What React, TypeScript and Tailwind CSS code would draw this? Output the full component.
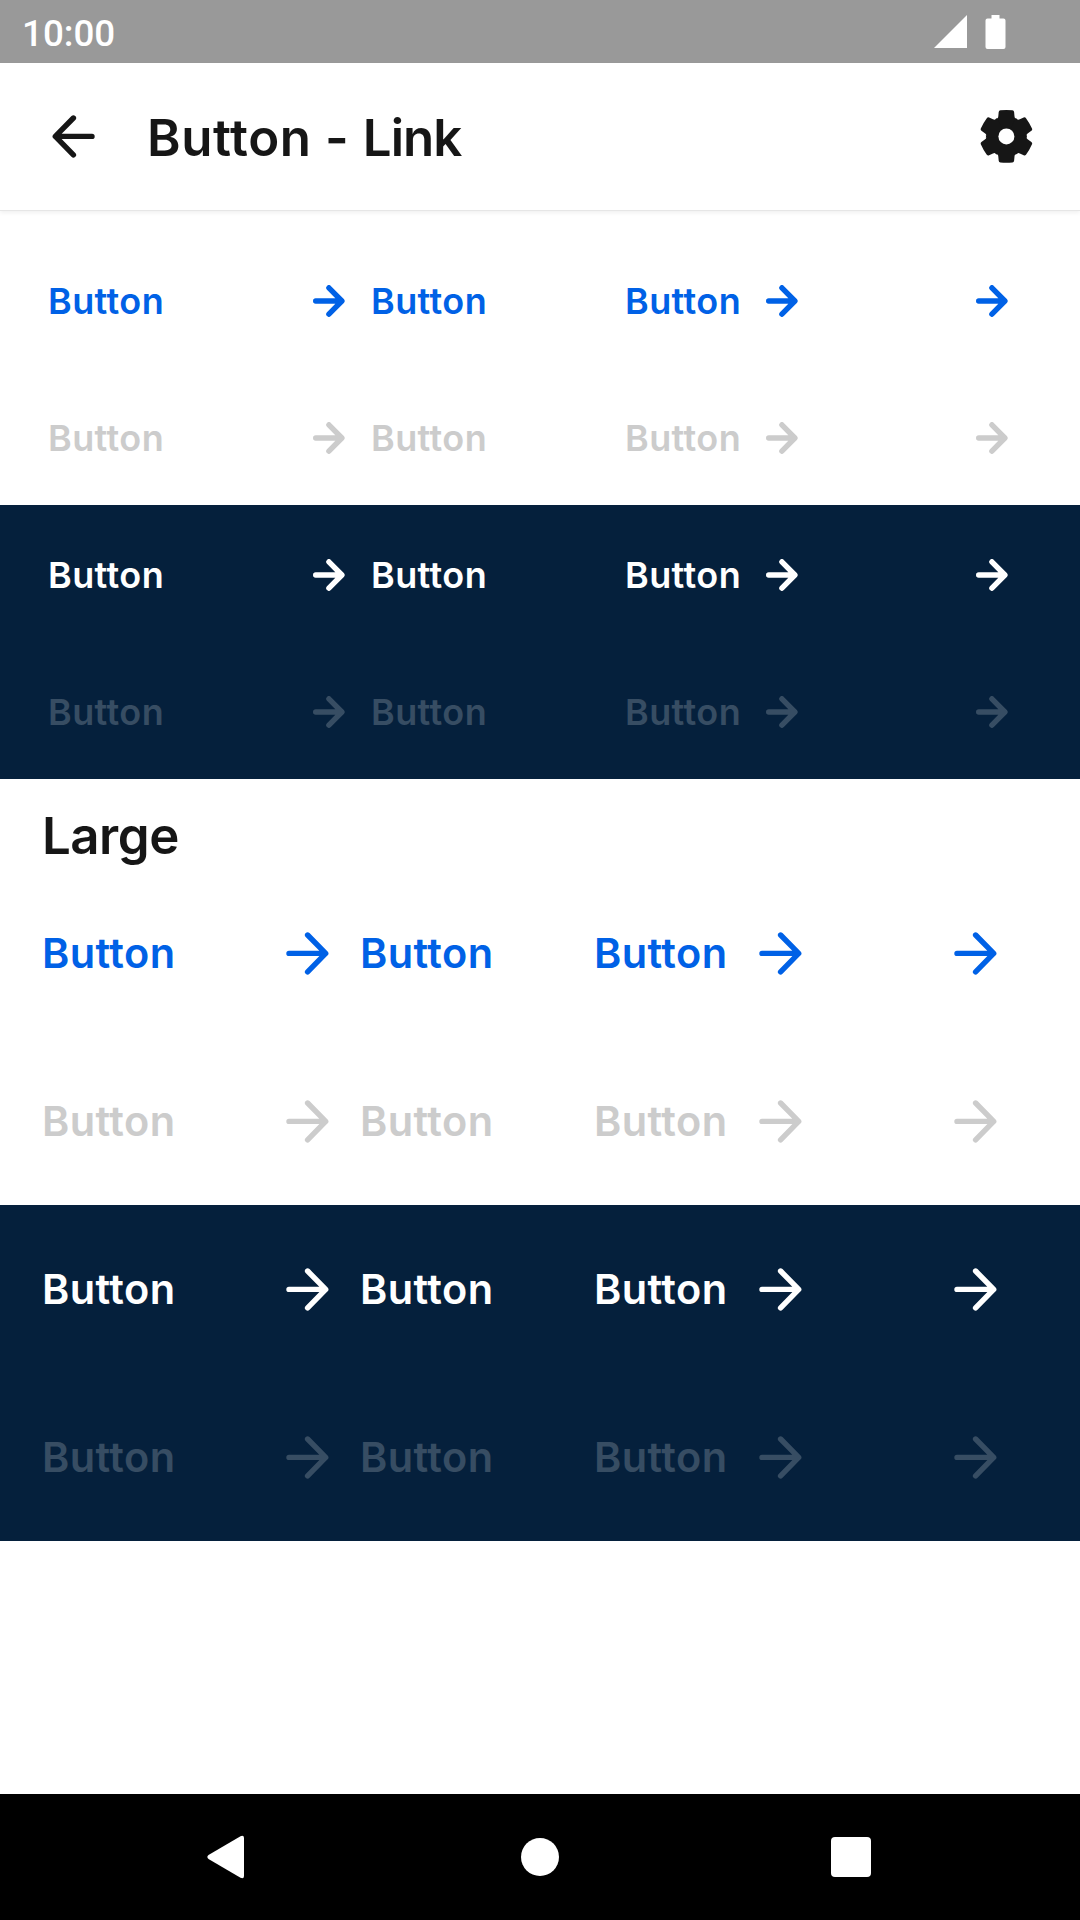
import React from "react";

function Arrow({ large = false, flip = false }: { large?: boolean; flip?: boolean }) {
  return large ? (
    <svg
      className={flip ? "h-[43px] w-[43px] shrink-0 -scale-x-100" : "h-[43px] w-[43px] shrink-0"}
      viewBox="0 0 43 43"
      fill="none"
      stroke="currentColor"
      strokeWidth="5.4"
      strokeLinecap="round"
      strokeLinejoin="round"
    >
      <path d="M3 21.4H39.5M21.6 3L39.7 21.4L21.6 39.9" />
    </svg>
  ) : (
    <svg
      className="h-[32px] w-[32px] shrink-0"
      viewBox="0 0 32 32"
      fill="none"
      stroke="currentColor"
      strokeWidth="5.4"
      strokeLinecap="round"
      strokeLinejoin="round"
    >
      <path d="M2.7 16H28.6M15.9 2.8L28.9 16L15.9 29.2" />
    </svg>
  );
}

function SmallRow({ color }: { color: string }) {
  return (
    <div
      className={`grid h-[137px] grid-cols-[265px_312px_351px_1fr] items-center pt-[3px] pl-[48px] text-[36px] leading-none font-semibold tracking-[0.4px] ${color}`}
    >
      <span>Button</span>
      <span className="flex items-center gap-[26px]">
        <Arrow />
        Button
      </span>
      <span className="flex items-center gap-[25px]">
        <span>Button</span>
        <Arrow />
      </span>
      <Arrow />
    </div>
  );
}

function LargeRow({ color }: { color: string }) {
  return (
    <div
      className={`grid h-[168px] grid-cols-[244px_308px_360px_1fr] items-center pl-[42px] text-[41.5px] leading-none font-semibold tracking-[0.4px] ${color}`}
    >
      <span className="pt-[2px]">Button</span>
      <span className="flex items-center gap-[31px]">
        <Arrow large />
        <span className="pt-[2px]">Button</span>
      </span>
      <span className="flex items-center gap-[32px]">
        <span className="pt-[2px]">Button</span>
        <Arrow large />
      </span>
      <Arrow large />
    </div>
  );
}

function Gear() {
  const tooth =
    "M0 0L-11.2 -17.4Q-8.2 -17.4 -8.1 -20.2L-7.7 -24.4Q-7.5 -25.9 -6 -26.1Q0 -26.8 6 -26.1Q7.5 -25.9 7.7 -24.4L8.1 -20.2Q8.2 -17.4 11.2 -17.4Z";
  return (
    <svg className="h-[54px] w-[54px]" viewBox="-27.4 -27.4 54 54" fill="#161616">
      {[0, 60, 120, 180, 240, 300].map((a) => (
        <path key={a} d={tooth} transform={`rotate(${a})`} />
      ))}
      <circle r="8" fill="#fff" />
    </svg>
  );
}

export default function App() {
  return (
    <div className="flex h-[1920px] w-[1080px] flex-col bg-white font-['Inter',sans-serif] text-[#161616]">
      <div className="flex h-[63px] shrink-0 items-center justify-between bg-[#999999] pr-[74px] pl-[22px] text-white">
        <span className="pt-[5px] font-['Roboto',sans-serif] text-[36.75px] leading-none font-medium">10:00</span>
        <div className="flex items-center gap-[18px]">
          <svg className="h-[34px] w-[33px]" viewBox="0 0 33 34" fill="currentColor">
            <path d="M33 0V33H0Z" />
          </svg>
          <svg className="h-[34px] w-[21px]" viewBox="0 0 21 34" fill="currentColor">
            <path d="M6.5 0H14.5V3.5H18.5Q20.5 3.5 20.5 5.5V32Q20.5 34 18.5 34H2.5Q.5 34 .5 32V5.5Q.5 3.5 2.5 3.5H6.5Z" />
          </svg>
        </div>
      </div>

      <header className="flex h-[148px] shrink-0 items-center border-b border-[#e6e6e6] pr-[47px] pb-px pl-[52px] shadow-[0_2px_4px_rgba(0,0,0,0.06)]">
        <Arrow large flip />
        <h1 className="ml-[52px] pt-[3px] text-[51px] leading-none font-semibold tracking-[0.6px]">
          Button - <span className="tracking-[-1px]">Link</span>
        </h1>
        <div className="ml-auto">
          <Gear />
        </div>
      </header>

      <main className="flex-1">
        <section className="pt-[20px]">
          <SmallRow color="text-[#0061e6]" />
          <SmallRow color="text-[#cccccc]" />
        </section>
        <section className="bg-[#05203c]">
          <SmallRow color="text-white" />
          <SmallRow color="text-[#374d63]" />
        </section>
        <h2 className="h-[90px] pt-[31px] pl-[42px] text-[51px] leading-none font-semibold tracking-[-0.5px]">Large</h2>
        <section>
          <LargeRow color="text-[#0061e6]" />
          <LargeRow color="text-[#cccccc]" />
        </section>
        <section className="bg-[#05203c]">
          <LargeRow color="text-white" />
          <LargeRow color="text-[#374d63]" />
        </section>
      </main>

      <nav className="flex h-[126px] shrink-0 items-center bg-black pl-[206px] text-white">
        <svg className="h-[44px] w-[39px]" viewBox="0 0 39 44" fill="currentColor">
          <path d="M34.5 1.2Q38 -.2 38 3V41Q38 44.2 34.5 42.8L2.5 24Q.2 22 2.5 20Z" />
        </svg>
        <span className="ml-[276px] h-[38px] w-[38px] rounded-full bg-white" />
        <span className="ml-[272px] h-[40px] w-[40px] rounded-[4px] bg-white" />
      </nav>
    </div>
  );
}
